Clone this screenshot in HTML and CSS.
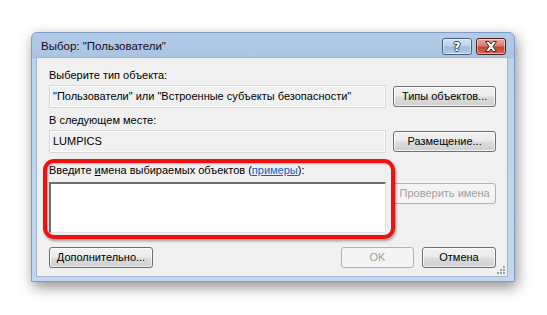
FILE: index.html
```html
<!DOCTYPE html>
<html lang="ru">
<head>
<meta charset="utf-8">
<link rel="stylesheet" href="styles.css">
</head>
<body>
<div class="window">
  <div class="titlebar">
    <span class="title">Выбор: "Пользователи"</span>
    <div class="tbtns">
      <div class="tbtn help"><span>?</span></div>
      <div class="tbtn close">
        <svg width="14" height="11" viewBox="0 0 14 11">
          <path d="M1.5 0.5 H5 L7 3 L9 0.5 H12.5 L9 5.5 L12.5 10.5 H9 L7 8 L5 10.5 H1.5 L5 5.5 Z" fill="#fff" stroke="#3b2a2a" stroke-width="1" stroke-linejoin="round"/>
        </svg>
      </div>
    </div>
  </div>
  <div class="client">
    <div class="label l1">Выберите тип объекта:</div>
    <div class="row r1">
      <div class="field">"Пользователи" или "Встроенные субъекты безопасности"</div>
      <div class="btn">Типы объектов...</div>
    </div>
    <div class="label l2">В следующем месте:</div>
    <div class="row r2">
      <div class="field">LUMPICS</div>
      <div class="btn">Размещение...</div>
    </div>
    <div class="label l3">Введите <u>и</u>мена выбираемых объектов (<a class="link">примеры</a>):</div>
    <div class="row r3">
      <div class="area"></div>
      <div class="btn disabled">Проверить имена</div>
    </div>
    <div class="bottom">
      <div class="btn wide">Дополнительно...</div>
      <div class="spacer"></div>
      <div class="btn ok disabled">OK</div>
      <div class="btn cancel">Отмена</div>
    </div>
    <svg class="grip" width="8" height="8" viewBox="0 0 8 8">
      <g fill="#a0a0a0">
        <rect x="6" y="0" width="2" height="2"/>
        <rect x="3" y="3" width="2" height="2"/><rect x="6" y="3" width="2" height="2"/>
        <rect x="0" y="6" width="2" height="2"/><rect x="3" y="6" width="2" height="2"/><rect x="6" y="6" width="2" height="2"/>
      </g>
    </svg>
  </div>
  <div class="highlight"></div>
</div>
</body>
</html>
```

FILE: styles.css
```css
html, body {
  margin: 0;
  padding: 0;
  background: #ffffff;
}
body {
  width: 547px;
  height: 315px;
  overflow: hidden;
  font-family: "Liberation Sans", Arial, sans-serif;
  font-size: 11px;
  color: #000;
}
.window {
  position: relative;
  margin: 32px 0 0 31px;
  width: 484px;
  height: 250px;
  box-sizing: border-box;
  background: linear-gradient(to bottom, #b3cbe7 0px, #a9c3e2 25px, #bcd3ec 26px, #c3d8ef 250px);
  border: 1px solid #7f9dc2;
  border-radius: 6px 6px 0 0;
  box-shadow: 2px 5px 14px rgba(0, 0, 0, 0.45);
  display: flex;
  flex-direction: column;
}
.titlebar {
  height: 24px;
  display: flex;
  align-items: flex-start;
  justify-content: space-between;
  padding: 0 8px 0 9px;
}
.title {
  margin-top: 6px;
  font-size: 11.5px;
  line-height: 15px;
  color: #1a0a20;
}
.tbtns {
  display: flex;
  gap: 4px;
  margin-top: 5px;
}
.tbtn {
  width: 30px;
  height: 17px;
  box-sizing: border-box;
  border: 1px solid #4d5f7d;
  border-radius: 3px;
  display: flex;
  align-items: center;
  justify-content: center;
  box-shadow: inset 0 0 0 1px rgba(255,255,255,0.45);
}
.help {
  background: linear-gradient(to bottom, #d5e3f3 0%, #bcd0ea 48%, #9fbadc 52%, #b4cbe6 100%);
}
.help span {
  font-family: "DejaVu Sans", sans-serif;
  font-weight: bold;
  font-size: 12px;
  line-height: 12px;
  color: #fff;
  text-shadow: 1px 0 0 #33405a, -1px 0 0 #33405a, 0 1px 0 #33405a, 0 -1px 0 #33405a;
}
.close {
  background: linear-gradient(to bottom, #e9a99d 0%, #da7f6e 45%, #c8432f 55%, #d46a53 100%);
  border-color: #4f2020;
}
.client {
  position: relative;
  flex: 1;
  margin: 0 6px 4px 4px;
  background: #f0f0f0;
  border: 1px solid #9fb6d2;
  padding: 0 11px 0 12px;
  display: flex;
  flex-direction: column;
}
.label {
  line-height: 15px;
  white-space: nowrap;
}
.l1 { margin-top: 10px; }
.l2 { margin-top: 5px; }
.l3 { margin-top: 10px; }
.row {
  display: flex;
  align-items: center;
  gap: 7px;
  margin-top: 2px;
}
.field {
  width: 338px;
  height: 23px;
  box-sizing: border-box;
  border: 1px solid #d8d8d8;
  box-shadow: inset 0 0 0 1px #fbfbfb;
  background: #f0f0f0;
  padding: 0 3px;
  line-height: 21px;
  white-space: nowrap;
  overflow: hidden;
}
.r3 {
  align-items: flex-start;
  margin-top: 4px;
}
.area {
  width: 338px;
  height: 51px;
  box-sizing: border-box;
  background: #fff;
  border-top: 2px solid #6e6e6e;
  border-left: 2px solid #6e6e6e;
  border-right: 1px solid #e3e3e3;
  border-bottom: 1px solid #e3e3e3;
}
.btn {
  width: 103px;
  height: 21px;
  box-sizing: border-box;
  border: 1px solid #707070;
  border-radius: 3px;
  background: linear-gradient(to bottom, #f2f2f2 0%, #ebebeb 48%, #dddddd 52%, #cfcfcf 100%);
  box-shadow: inset 0 0 0 1px rgba(255,255,255,0.7);
  display: flex;
  align-items: center;
  justify-content: center;
  white-space: nowrap;
  line-height: 15px;
}
.btn.disabled {
  border-color: #adb2b5;
  background: #f4f4f4;
  box-shadow: none;
  color: #a0a0a0;
}
.r3 .btn { margin-top: 1px; }
.bottom {
  display: flex;
  align-items: center;
  margin-top: 14px;
}
.spacer { flex: 1; }
.wide { width: 104px; }
.ok { width: 73px; margin-right: 8px; }
.cancel { width: 74px; }
.grip {
  position: absolute;
  right: 2px;
  bottom: 2px;
}
.link {
  color: #0066cc;
  text-decoration: underline;
}
.highlight {
  position: absolute;
  left: 11px;
  top: 126px;
  width: 352px;
  height: 80px;
  box-sizing: border-box;
  border: 4px solid #ee1111;
  border-radius: 11px;
  box-shadow: 1px 2px 3px rgba(0,0,0,0.35), inset 1px 1px 2px rgba(0,0,0,0.25);
  pointer-events: none;
}
```
